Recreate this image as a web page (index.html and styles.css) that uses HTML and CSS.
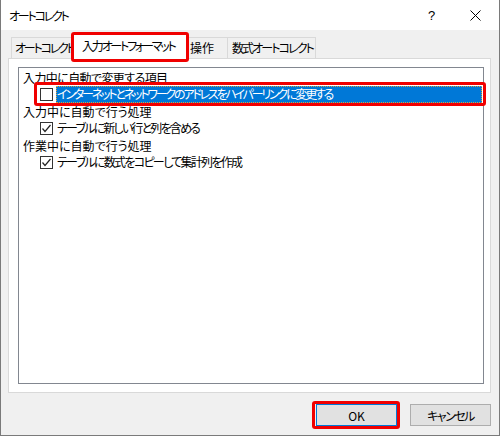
FILE: index.html
```html
<!DOCTYPE html>
<html lang="ja">
<head>
<meta charset="utf-8">
<title>オートコレクト</title>
<link rel="stylesheet" href="styles.css">
</head>
<body>
<div class="dialog">
  <div class="titlebar">
    <span class="title">オートコレクト</span>
    <span class="tb-btn help">?</span>
    <span class="tb-btn close">
      <svg width="11" height="11" viewBox="0 0 11 11"><path d="M0.5 0.5 L10.5 10.5 M10.5 0.5 L0.5 10.5" stroke="#000" stroke-width="1" fill="none"/></svg>
    </span>
  </div>
  <div class="body">
    <div class="tabs">
      <div class="tab t1">オートコレクト</div>
      <div class="tab active mark t2">入力オートフォーマット</div>
      <div class="tab t3">操作</div>
      <div class="tab t4">数式オートコレクト</div>
    </div>
    <div class="panel">
      <div class="listbox">
        <div class="row head h1">入力中に自動で変更する項目</div>
        <div class="row item mark-row">
          <span class="cb"></span>
          <span class="label selected l1">インターネットとネットワークのアドレスをハイパーリンクに変更する</span>
        </div>
        <div class="row head">入力中に自動で行う処理</div>
        <div class="row item">
          <span class="cb checked"><svg width="11" height="11" viewBox="0 0 11 11"><path d="M1.5 5.5 L4 8.5 L9.5 2" stroke="#222" stroke-width="1.2" fill="none"/></svg></span>
          <span class="label l2">テーブルに新しい行と列を含める</span>
        </div>
        <div class="row head">作業中に自動で行う処理</div>
        <div class="row item">
          <span class="cb checked"><svg width="11" height="11" viewBox="0 0 11 11"><path d="M1.5 5.5 L4 8.5 L9.5 2" stroke="#222" stroke-width="1.2" fill="none"/></svg></span>
          <span class="label l3">テーブルに数式をコピーして集計列を作成</span>
        </div>
      </div>
    </div>
    <div class="buttons">
      <button class="btn default mark-btn">OK</button>
      <button class="btn cancel">キャンセル</button>
    </div>
  </div>
</div>
</body>
</html>
```
FILE: styles.css
```css
* { box-sizing: border-box; }
html, body { margin: 0; padding: 0; }
body {
  width: 500px;
  height: 436px;
  font-family: "Noto Sans CJK JP", "Noto Sans", sans-serif;
  font-size: 12px;
  font-weight: 400;
  font-feature-settings: "palt";
  color: #000;
  background: #fff;
}
.dialog {
  width: 500px;
  height: 436px;
  border: 1px solid #7a7a7a;
  border-top: none;
  display: flex;
  flex-direction: column;
  background: #f0f0f0;
}
.titlebar {
  height: 30px;
  background: #fff;
  display: flex;
  align-items: center;
  flex: none;
}
.title {
  padding-left: 8px;
  flex: 1;
  font-size: 12px;
  letter-spacing: -2.2px;
}
.tb-btn {
  width: 46px;
  height: 30px;
  display: flex;
  align-items: center;
  justify-content: center;
}
.help { font-size: 13px; font-family: "Liberation Sans", sans-serif; padding-top: 1px; padding-left: 3px; }
.close { padding-right: 1px; }
.body {
  flex: 1;
  padding: 4px 8px 0 7px;
  display: flex;
  flex-direction: column;
}
.tabs {
  height: 24px;
  display: flex;
  align-items: flex-end;
  padding-left: 3px;
  position: relative;
  z-index: 2;
}
.tab {
  height: 21px;
  border: 1px solid #d9d9d9;
  border-bottom: none;
  margin-right: -1px;
  background: #f0f0f0;
  padding: 0 2px 0 3px;
  line-height: 19px;
  white-space: nowrap;
}
.t1 { width: 63px; letter-spacing: -2.2px; }
.t3 { width: 42px; padding-left: 3px; }
.t4 { width: 89px; padding-left: 4px; letter-spacing: -1.9px; }
.tab.active {
  height: 25px;
  margin-bottom: -1px;
  margin-left: -1px;
  margin-right: -1px;
  width: 115px;
  background: #fff;
  padding-left: 9px;
  line-height: 22px;
  position: relative;
  letter-spacing: -2.2px;
}
.mark::after {
  content: "";
  position: absolute;
  left: -2px;
  top: -3px;
  right: -3px;
  bottom: -3px;
  border: 3px solid #f00000;
  border-radius: 3px;
}
.panel {
  height: 335px;
  background: #fff;
  border: 1px solid #d9d9d9;
  padding: 8px 6px 8px 9px;
  flex: none;
}
.listbox {
  height: 100%;
  border: 1px solid #828790;
  padding: 1px 0 0 4px;
}
.row {
  height: 17px;
  line-height: 17px;
  white-space: nowrap;
}
.h1 { letter-spacing: -0.6px; }
.item {
  display: flex;
  align-items: center;
  padding-left: 17px;
}
.mark-row { position: relative; }
.mark-row::after {
  content: "";
  position: absolute;
  left: 11px;
  top: -4px;
  right: -3px;
  bottom: -3px;
  border: 3px solid #f00000;
  border-radius: 3px;
}
.cb {
  width: 13px;
  height: 13px;
  border: 1px solid #333;
  background: #fff;
  flex: none;
  display: flex;
  align-items: center;
  justify-content: center;
}
.label {
  margin-left: 3px;
  padding: 0 2px 0 1px;
  height: 17px;
  line-height: 16px;
}
.l1 { letter-spacing: -2.2px; }
.l2 { letter-spacing: -1.8px; }
.l3 { letter-spacing: -1.7px; }
.label.selected {
  flex: 1;
  background: #0078d7;
  color: #fff;
  outline: 1px dotted #d9a040;
  outline-offset: -1px;
  margin-right: 1px;
}
.buttons {
  display: flex;
  justify-content: flex-end;
  gap: 13px;
  margin-top: 11px;
}
.btn {
  width: 81px;
  height: 22px;
  font: inherit;
  font-size: 12px;
  font-feature-settings: "palt";
  background: #e1e1e1;
  border: 1px solid #adadad;
  border-radius: 0;
  padding: 0;
  color: #000;
}
.cancel { letter-spacing: -1.5px; }
.btn.default {
  border: 1px solid #0078d7;
  box-shadow: inset 0 0 0 1px #e1e1e1;
  position: relative;
}
.mark-btn::after {
  content: "";
  position: absolute;
  left: -5px;
  top: -4px;
  right: -4px;
  bottom: -4px;
  border: 3px solid #f00000;
  border-radius: 3px;
}
```
